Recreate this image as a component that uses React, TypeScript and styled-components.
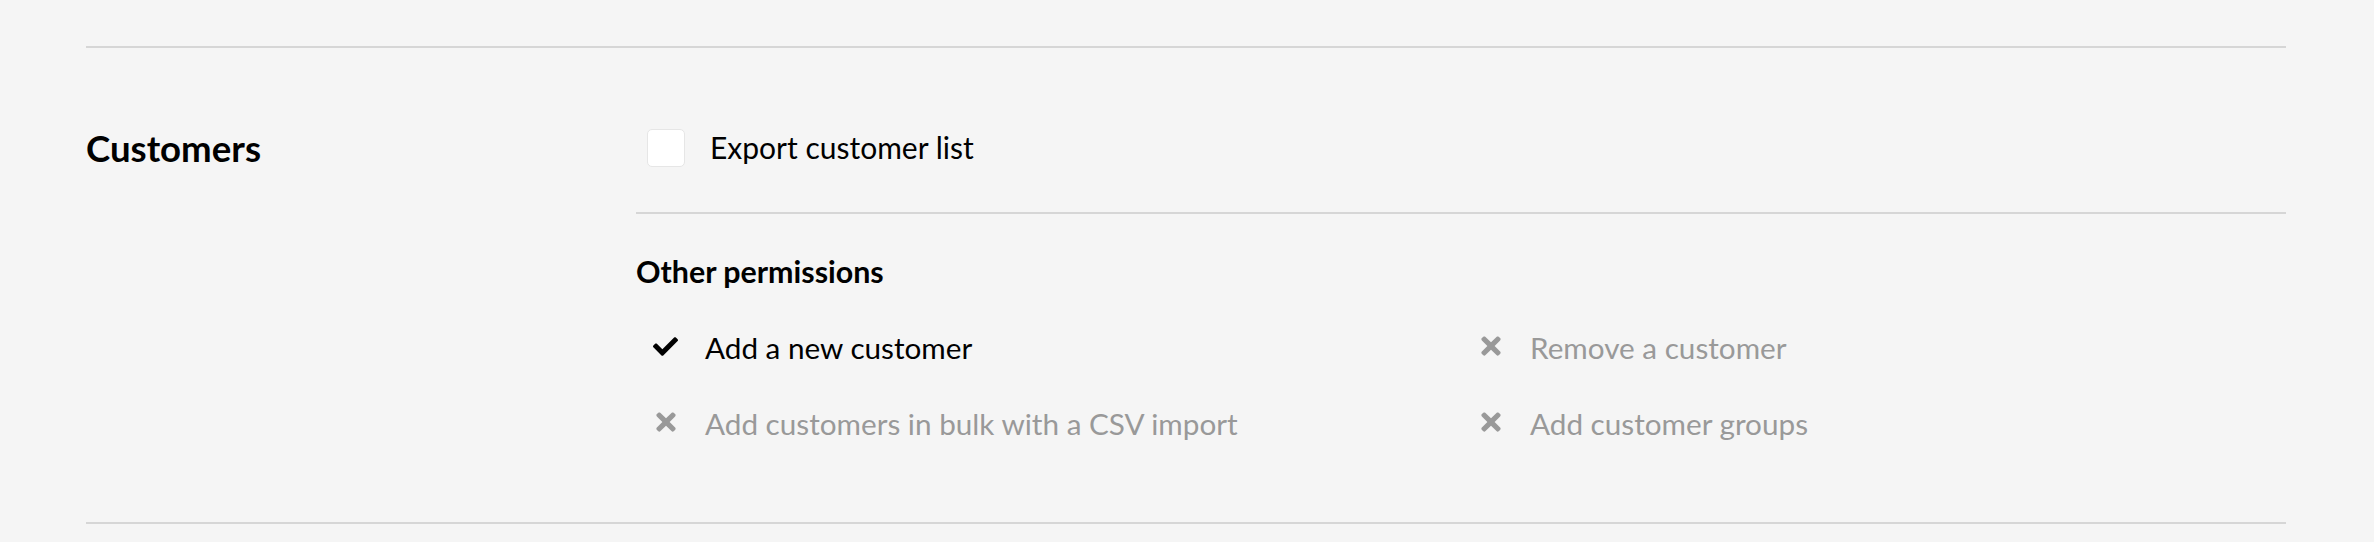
import React from "react";
import styled, { createGlobalStyle } from "styled-components";
import { FaCheck, FaTimes } from "react-icons/fa";

const GlobalStyle = createGlobalStyle`
  html, body {
    margin: 0;
    padding: 0;
    background: #f5f5f5;
  }
  body {
    font-family: Lato, "Open Sans", Arial, sans-serif;
    color: #000;
  }
`;

const Page = styled.div`
  width: 2200px;
  padding: 46px 0 0 86px;
`;

const Section = styled.section`
  display: grid;
  grid-template-columns: 550px 1fr;
  border-top: 2px solid #d6d6d6;
  border-bottom: 2px solid #d6d6d6;
`;

const SectionTitle = styled.h2`
  margin: 0;
  padding-top: 79px;
  font-size: 36.6px;
  line-height: 42px;
  font-weight: 700;
  color: #000;
`;

const Content = styled.div`
  display: flex;
  flex-direction: column;
`;

const ExportBlock = styled.div`
  padding: 81px 0 45px;
  border-bottom: 2px solid #d6d6d6;
`;

const CheckRow = styled.label`
  display: flex;
  align-items: center;
  padding-left: 11px;
  cursor: pointer;
`;

const Checkbox = styled.span`
  box-sizing: border-box;
  width: 38px;
  height: 38px;
  background: #fff;
  border: 1px solid #e6e6e6;
  border-radius: 5px;
  flex-shrink: 0;
`;

const CheckLabel = styled.span`
  margin: -3px 0 0 25px;
  font-size: 30px;
  line-height: 38px;
  color: #000;
`;

const OtherBlock = styled.div`
  padding: 37px 0 78px;
`;

const OtherTitle = styled.h3`
  margin: 0;
  font-size: 30.4px;
  line-height: 40px;
  font-weight: 700;
  color: #000;
`;

const PermGrid = styled.ul`
  list-style: none;
  margin: 37px 0 0;
  padding: 0;
  display: grid;
  grid-template-columns: 1fr 1fr;
  row-gap: 36px;
`;

const PermItem = styled.li<{ $allowed: boolean }>`
  display: flex;
  align-items: center;
  height: 40px;
  color: ${(p) => (p.$allowed ? "#000" : "#999")};
`;

const IconBox = styled.span`
  width: 59px;
  display: flex;
  justify-content: center;
  align-items: center;
  margin-top: -4px;
  flex-shrink: 0;
`;

const PermText = styled.span`
  margin-left: 10px;
  font-size: 29.7px;
  line-height: 40px;
`;

const permissions = [
  { label: "Add a new customer", allowed: true },
  { label: "Remove a customer", allowed: false },
  { label: "Add customers in bulk with a CSV import", allowed: false },
  { label: "Add customer groups", allowed: false },
];

export default function App() {
  return (
    <>
      <GlobalStyle />
      <Page>
        <Section>
          <SectionTitle>Customers</SectionTitle>
          <Content>
            <ExportBlock>
              <CheckRow>
                <Checkbox />
                <CheckLabel>Export customer list</CheckLabel>
              </CheckRow>
            </ExportBlock>
            <OtherBlock>
              <OtherTitle>Other permissions</OtherTitle>
              <PermGrid>
                {permissions.map((p) => (
                  <PermItem key={p.label} $allowed={p.allowed}>
                    <IconBox>
                      {p.allowed ? <FaCheck size={25} /> : <FaTimes size={28} />}
                    </IconBox>
                    <PermText>{p.label}</PermText>
                  </PermItem>
                ))}
              </PermGrid>
            </OtherBlock>
          </Content>
        </Section>
      </Page>
    </>
  );
}
